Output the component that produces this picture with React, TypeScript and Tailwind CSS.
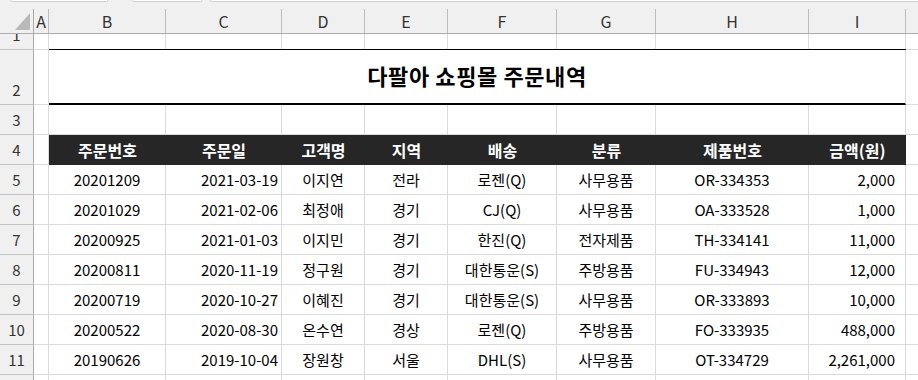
const cols = [
  { key: "A", w: "w-[15px]" },
  { key: "B", w: "w-[117px]" },
  { key: "C", w: "w-[116px]" },
  { key: "D", w: "w-[83px]" },
  { key: "E", w: "w-[83px]" },
  { key: "F", w: "w-[109px]" },
  { key: "G", w: "w-[99px]" },
  { key: "H", w: "w-[153px]" },
  { key: "I", w: "w-[97px]" },
]

const headers = ["주문번호", "주문일", "고객명", "지역", "배송", "분류", "제품번호", "금액(원)"]

// 정렬: B 가운데, C 오른쪽, I 오른쪽
const align = [
  "justify-center",
  "justify-end pr-[3px]",
  "justify-center",
  "justify-center",
  "justify-center",
  "justify-center",
  "justify-center",
  "justify-end pr-[10px]",
]

const orders = [
  ["20201209", "2021-03-19", "이지연", "전라", "로젠(Q)", "사무용품", "OR-334353", "2,000"],
  ["20201029", "2021-02-06", "최정애", "경기", "CJ(Q)", "사무용품", "OA-333528", "1,000"],
  ["20200925", "2021-01-03", "이지민", "경기", "한진(Q)", "전자제품", "TH-334141", "11,000"],
  ["20200811", "2020-11-19", "정구원", "경기", "대한통운(S)", "주방용품", "FU-334943", "12,000"],
  ["20200719", "2020-10-27", "이혜진", "경기", "대한통운(S)", "사무용품", "OR-333893", "10,000"],
  ["20200522", "2020-08-30", "온수연", "경상", "로젠(Q)", "주방용품", "FO-333935", "488,000"],
  ["20190626", "2019-10-04", "장원창", "서울", "DHL(S)", "사무용품", "OT-334729", "2,261,000"],
]

function RowLabel({ n }: { n?: number }) {
  return (
    <div className="w-[34px] shrink-0 flex items-end justify-center overflow-hidden bg-[#f0f0f0] border-r border-b border-r-[#ababab] border-b-[#c4c4c4] pb-[4px] text-[15px] leading-[20px] text-[#333]">
      {n}
    </div>
  )
}

function Blank({ w }: { w: string }) {
  return <div className={`${w} shrink-0 border-r border-b border-[#dadada]`} />
}

function Tail() {
  return <div className="flex-1 border-b border-[#dadada]" />
}

export default function App() {
  return (
    <div className="w-[918px] h-[380px] overflow-hidden bg-white text-black font-['Noto_Sans_CJK_KR',sans-serif]">
      {/* 상단 헤더 */}
      <div className="h-[34px] bg-[#f0f0f0] border-b border-[#ababab] flex flex-col">
        <div className="h-[9px] flex items-start">
          <div className="ml-[10px] w-[98px] h-[2px] bg-white border-b border-x border-[#cfcfcf] rounded-b-[3px]" />
          <div className="ml-[24px] w-[70px] h-[2px] bg-white border-b border-x border-[#cfcfcf] rounded-b-[3px]" />
          <div className="ml-[8px] flex-1 h-[2px] bg-white border-b border-l border-[#cfcfcf] rounded-bl-[3px]" />
        </div>
        <div className="flex-1 flex">
          <div className="w-[34px] shrink-0 border-r border-[#ababab] flex items-end justify-end pr-[3px] pb-[3px]">
            <svg width="15" height="17" viewBox="0 0 15 17">
              <path d="M15 0 L15 17 L0 17 Z" fill="#b9b9b9" />
            </svg>
          </div>
          {cols.map((c) => (
            <div
              key={c.key}
              className={`${c.w} shrink-0 border-r border-[#bdbdbd] flex items-center justify-center text-[16px] leading-none text-[#333]`}
            >
              {c.key}
            </div>
          ))}
          <div className="flex-1" />
        </div>
      </div>

      {/* 1행 */}
      <div className="flex h-[16px]">
        <RowLabel n={1} />
        <Blank w="w-[15px]" />
        <div className="w-[857px] shrink-0 flex border-b border-black">
          {cols.slice(1).map((c) => (
            <div key={c.key} className={`${c.w} shrink-0 border-r border-[#dadada]`} />
          ))}
        </div>
        <Tail />
      </div>

      {/* 2행: 제목 */}
      <div className="flex h-[55px]">
        <RowLabel n={2} />
        <Blank w="w-[15px]" />
        <div className="w-[857px] shrink-0 flex items-center justify-center border-b-2 border-b-black border-r border-r-[#dadada] pb-[2px] text-[22px] font-bold tracking-[0.6px]">
          다팔아 쇼핑몰 주문내역
        </div>
        <Tail />
      </div>

      {/* 3행 */}
      <div className="flex h-[30px]">
        <RowLabel n={3} />
        {cols.map((c) => (
          <Blank key={c.key} w={c.w} />
        ))}
        <Tail />
      </div>

      {/* 4행: 머리글 */}
      <div className="flex h-[30px]">
        <RowLabel n={4} />
        <Blank w="w-[15px]" />
        <div className="w-[857px] shrink-0 flex bg-[#262626] text-white text-[16px] font-bold">
          {cols.slice(1).map((c, i) => (
            <div key={c.key} className={`${c.w} shrink-0 flex items-center justify-center`}>
              {headers[i]}
            </div>
          ))}
        </div>
        <Tail />
      </div>

      {orders.map((row, r) => (
        <div key={r} className="flex h-[30px]">
          <RowLabel n={r + 5} />
          <Blank w="w-[15px]" />
          {cols.slice(1).map((c, i) => (
            <div
              key={c.key}
              className={`${c.w} shrink-0 flex items-center ${align[i]} border-r border-b border-[#dadada] text-[15px] leading-[20px]`}
            >
              {row[i]}
            </div>
          ))}
          <Tail />
        </div>
      ))}

      {/* 12행: 잘려서 번호가 보이지 않음 */}
      <div className="flex h-[30px]">
        <RowLabel />
        {cols.map((c) => (
          <Blank key={c.key} w={c.w} />
        ))}
        <Tail />
      </div>
    </div>
  )
}
